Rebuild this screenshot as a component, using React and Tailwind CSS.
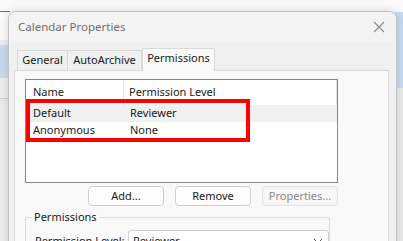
import React from "react";

const font = { fontFamily: '"Noto Sans", "Open Sans", sans-serif' };

function Btn({ children, disabled }) {
  return (
    <div
      className={`w-[76px] h-[20px] rounded-[4px] border flex items-center justify-center text-[11px] ${
        disabled ? "border-[#e3e3e3] bg-[#f6f6f6] text-[#8a8a8a]" : "border-[#cfcfcf] bg-[#fdfdfd] text-[#1a1a1a]"
      }`}
    >
      {children}
    </div>
  );
}

export default function App() {
  return (
    <div className="relative w-[403px] h-[241px] overflow-hidden bg-[#fafafa]" style={font}>
      {/* background app pieces */}
      <div className="absolute left-0 top-[11px] w-[10px] h-[1px] bg-[#2f7ad6]" />
      <div className="absolute left-0 top-[40px] w-[10px] h-[201px] bg-[#ececec]" />
      <div className="absolute left-0 top-[45px] w-[8px] h-[33px] bg-[#c7dbf0]" />
      <div className="absolute left-0 top-[98px] w-[8px] h-[1px] bg-[#cfcfcf]" />
      <div className="absolute right-0 top-[12px] w-[8px] h-[76px] bg-[#c7dbf0]" />
      <div className="absolute right-0 top-[88px] w-[8px] h-[153px] bg-[#ececec]" />

      {/* dialog */}
      <div className="absolute left-[8px] top-[11px] w-[389px] h-[240px] rounded-t-[8px] border border-[#c2c2c2] bg-[#f0f0f0] shadow-[0_0_10px_rgba(0,0,0,0.15)] overflow-hidden">
        <div className="h-[30px] flex items-center justify-between pl-[9px] pr-[10px] bg-[#f3f3f3]">
          <span className="text-[11.5px] text-[#707070]">Calendar Properties</span>
          <svg width="12" height="12" viewBox="0 0 12 12" className="mr-[1px]">
            <path d="M1 1 L11 11 M11 1 L1 11" stroke="#8a8a8a" strokeWidth="1.1" />
          </svg>
        </div>

        <div className="pl-[5px] pt-[5px]">
          {/* tabs */}
          <div className="flex items-end pl-[3px] h-[23px]">
            <div className="h-[20px] w-[51px] border border-b-0 border-[#d9d9d9] bg-[#f0f0f0] flex items-center justify-center text-[11px] text-[#1a1a1a]">
              General
            </div>
            <div className="h-[20px] w-[74px] border border-l-0 border-b-0 border-[#d9d9d9] bg-[#f0f0f0] flex items-center justify-center text-[11px] text-[#1a1a1a]">
              AutoArchive
            </div>
            <div className="relative z-10 -mb-[1px] h-[23px] w-[73px] border border-b-0 border-[#d9d9d9] bg-[#f9f9f9] flex items-center justify-center pb-[3px] text-[11px] text-[#1a1a1a]">
              Permissions
            </div>
          </div>

          {/* panel */}
          <div className="relative w-[375px] h-[200px] border border-[#d9d9d9] bg-[#f9f9f9] pl-[10px] pt-[8px]">
            {/* listbox */}
            <div className="w-[313px] h-[104px] border border-[#828790] bg-white">
              <div className="h-[25px] flex items-center text-[11px] text-[#1a1a1a]">
                <div className="w-[98px] h-full flex items-center pl-[7px] border-r border-[#e5e5e5]">Name</div>
                <div className="flex-1 h-full flex items-center pl-[5px] border-r border-[#e5e5e5]">Permission Level</div>
              </div>
              <div className="h-[17px] flex items-center text-[11px] text-[#1a1a1a] bg-[#f0f0f0]">
                <div className="w-[98px] pl-[7px]">Default</div>
                <div className="pl-[6px]">Reviewer</div>
              </div>
              <div className="h-[17px] flex items-center text-[11px] text-[#1a1a1a]">
                <div className="w-[98px] pl-[7px]">Anonymous</div>
                <div className="pl-[6px]">None</div>
              </div>
            </div>

            {/* buttons */}
            <div className="w-[313px] flex justify-end gap-[11px] mt-[3px]">
              <Btn>Add...</Btn>
              <Btn>Remove</Btn>
              <Btn disabled>Properties...</Btn>
            </div>

            {/* group box */}
            <div className="relative mt-[11px] w-[305px] h-[40px] border border-[#dcdcdc] rounded-[2px]">
              <span className="absolute -top-[9px] left-[6px] px-[2px] bg-[#f9f9f9] text-[11px] text-[#1a1a1a]">
                Permissions
              </span>
              <div className="flex items-center mt-[12px] pl-[9px]">
                <span className="w-[93px] text-[11px] text-[#1a1a1a]">Permission Level:</span>
                <div className="w-[201px] h-[22px] rounded-[3px] border border-[#cfcfcf] bg-white flex items-center justify-between pl-[4px] pr-[5px] text-[11px] text-[#1a1a1a]">
                  <span>Reviewer</span>
                  <svg width="10" height="6" viewBox="0 0 10 6">
                    <path d="M1 1 L5 5 L9 1" fill="none" stroke="#555" strokeWidth="1" />
                  </svg>
                </div>
              </div>
            </div>

            {/* red highlight */}
            <div className="absolute left-[11px] top-[28px] w-[224px] h-[43px] border-[4px] border-[#ff0000]" />
          </div>
        </div>
      </div>
    </div>
  );
}
